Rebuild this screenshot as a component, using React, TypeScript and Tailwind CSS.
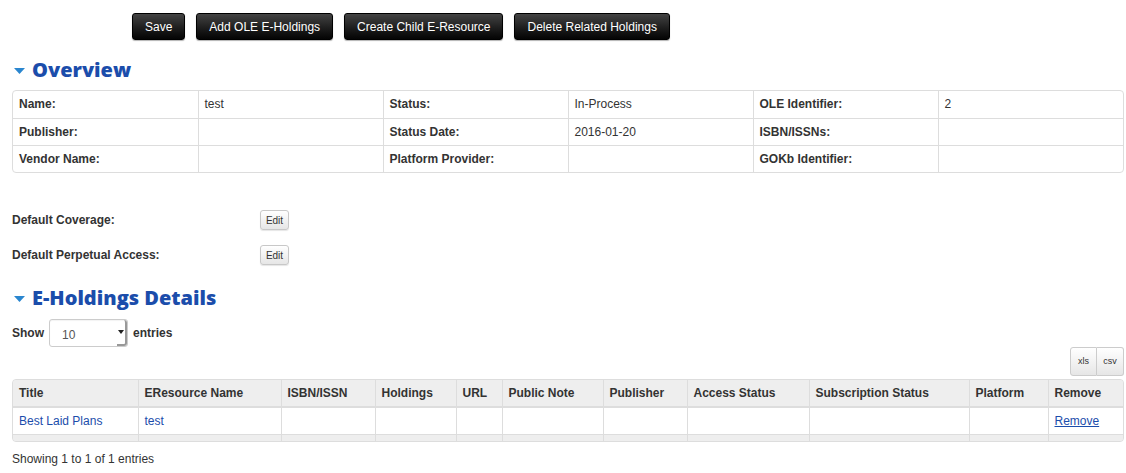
import { useState } from "react";

const overviewRows = [
  ["Name:", "test", "Status:", "In-Process", "OLE Identifier:", "2"],
  ["Publisher:", "", "Status Date:", "2016-01-20", "ISBN/ISSNs:", ""],
  ["Vendor Name:", "", "Platform Provider:", "", "GOKb Identifier:", ""],
];

const holdingCols = [
  { name: "Title", w: "w-[125px]" },
  { name: "EResource Name", w: "w-[143px]" },
  { name: "ISBN/ISSN", w: "w-[94px]" },
  { name: "Holdings", w: "w-[81px]" },
  { name: "URL", w: "w-[46px]" },
  { name: "Public Note", w: "w-[101px]" },
  { name: "Publisher", w: "w-[84px]" },
  { name: "Access Status", w: "w-[122px]" },
  { name: "Subscription Status", w: "w-[160px]" },
  { name: "Platform", w: "w-[79px]" },
  { name: "Remove", w: "" },
];

const SectionTitle = ({ children }: { children: string }) => (
  <h2 className="flex items-center gap-[7px] pl-[14px] font-['Open_Sans',sans-serif] text-[20px] font-extrabold leading-none text-[#1b4dab]">
    <svg width="11" height="6" viewBox="0 0 11 6" className="mt-[2px]">
      <polygon points="0,0 11,0 5.5,6" fill="#2a86cf" />
    </svg>
    {children}
  </h2>
);

const DarkButton = ({ children }: { children: string }) => (
  <button className="h-[27px] rounded-[3px] border border-black bg-gradient-to-b from-[#444] to-[#050505] px-[12px] text-[12px] text-white shadow-[0_1px_1px_rgba(0,0,0,0.3)]">
    {children}
  </button>
);

const EditButton = () => (
  <button className="h-[20px] w-[29px] rounded-[3px] border border-[#c8c8c8] bg-gradient-to-b from-white to-[#e6e6e6] text-[10px] text-[#333] shadow-[0_1px_1px_rgba(0,0,0,0.1)]">
    Edit
  </button>
);

const App = () => {
  const [pageSize, setPageSize] = useState("10");

  return (
    <div className="min-h-screen w-[1126px] bg-white font-['Liberation_Sans',Arial,sans-serif] text-[12px] text-[#333]">
      {/* top action bar */}
      <div className="flex gap-[11px] pl-[132px] pt-[13px]">
        <DarkButton>Save</DarkButton>
        <DarkButton>Add OLE E-Holdings</DarkButton>
        <DarkButton>Create Child E-Resource</DarkButton>
        <DarkButton>Delete Related Holdings</DarkButton>
      </div>

      <div className="mt-[20px]">
        <SectionTitle>Overview</SectionTitle>
      </div>

      <div className="ml-[12px] mr-[2px] mt-[10px] overflow-hidden rounded-[4px] border border-[#ddd]">
        <table className="w-full table-fixed border-collapse">
          <tbody>
            {overviewRows.map((row, i) => (
              <tr key={i} className={i > 0 ? "border-t border-[#ddd]" : ""}>
                {row.map((cell, j) => (
                  <td
                    key={j}
                    className={`h-[27px] px-[6px] align-middle ${j > 0 ? "border-l border-[#ddd]" : ""} ${j % 2 === 0 ? "font-bold" : ""}`}
                  >
                    {cell}
                  </td>
                ))}
              </tr>
            ))}
          </tbody>
        </table>
      </div>

      {/* default fields */}
      <div className="mt-[37px] flex flex-col gap-[15px] pl-[12px]">
        <div className="flex items-center">
          <span className="w-[248px] font-bold">Default Coverage:</span>
          <EditButton />
        </div>
        <div className="flex items-center">
          <span className="w-[248px] font-bold">Default Perpetual Access:</span>
          <EditButton />
        </div>
      </div>

      <div className="mt-[23px]">
        <SectionTitle>E-Holdings Details</SectionTitle>
      </div>

      <div className="mt-[11px] flex items-center gap-[5px] pl-[12px] font-bold">
        <span>Show</span>
        <div className="relative h-[28px] w-[79px] rounded-[3px] border border-[#ccc] bg-white shadow-[inset_0_1px_1px_rgba(0,0,0,0.05)]">
          <select
            value={pageSize}
            onChange={(e) => setPageSize(e.target.value)}
            className="h-full w-full appearance-none bg-transparent pl-[12px] pt-[3px] text-[12px] font-normal text-[#555] outline-none"
          >
            <option>10</option>
            <option>25</option>
            <option>50</option>
          </select>
          <span className="pointer-events-none absolute right-0 top-0 flex h-full w-[10px] items-center justify-center rounded-r-[3px] border-b-2 border-r-2 border-[#999]">
            <svg width="6" height="4" viewBox="0 0 6 4">
              <polygon points="0,0 6,0 3,4" fill="#222" />
            </svg>
          </span>
        </div>
        <span>entries</span>
      </div>

      {/* export buttons */}
      <div className="mr-[2px] flex justify-end">
        <button className="h-[29px] w-[27px] rounded-l-[3px] border border-[#ccc] bg-gradient-to-b from-white to-[#e6e6e6] text-[9px] text-[#333]">
          xls
        </button>
        <button className="h-[29px] w-[27px] rounded-r-[3px] border border-l-0 border-[#ccc] bg-gradient-to-b from-white to-[#e6e6e6] text-[9px] text-[#333]">
          csv
        </button>
      </div>

      <div className="ml-[12px] mr-[2px] mt-[3px] overflow-hidden rounded-[4px] border border-[#ddd] bg-[#eee]">
        <table className="w-full table-fixed border-collapse">
          <thead>
            <tr className="bg-[#eee]">
              {holdingCols.map((c, j) => (
                <th
                  key={c.name}
                  className={`${c.w} h-[27px] px-[6px] text-left font-bold ${j > 0 ? "border-l border-[#ddd]" : ""}`}
                >
                  {c.name}
                </th>
              ))}
            </tr>
          </thead>
          <tbody>
            <tr className="border-t-2 border-[#ddd] bg-white">
              {holdingCols.map((c, j) => (
                <td
                  key={c.name}
                  className={`h-[27px] px-[6px] ${j > 0 ? "border-l border-[#ddd]" : ""}`}
                >
                  {j === 0 && <a className="text-[#1b4dab]">Best Laid Plans</a>}
                  {j === 1 && <a className="text-[#1b4dab]">test</a>}
                  {j === 10 && <a className="text-[#1b4dab] underline">Remove</a>}
                </td>
              ))}
            </tr>
            <tr className="border-t border-[#ddd] bg-[#eee]">
              {holdingCols.map((c, j) => (
                <td
                  key={c.name}
                  className={`h-[7px] p-0 ${j > 0 ? "border-l border-[#ddd]" : ""}`}
                />
              ))}
            </tr>
          </tbody>
        </table>
      </div>

      <div className="mt-[8px] pl-[12px]">Showing 1 to 1 of 1 entries</div>
    </div>
  );
};

export default App;
